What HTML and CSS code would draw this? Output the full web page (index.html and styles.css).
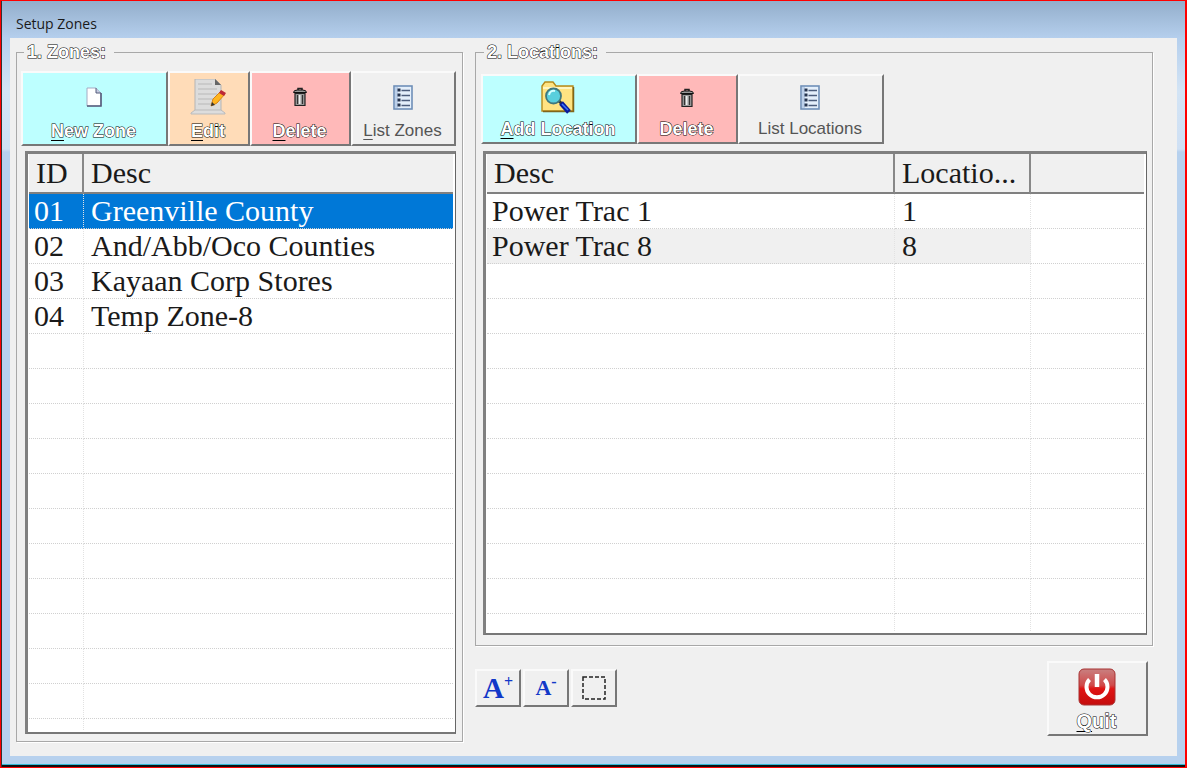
FILE: index.html
```html
<!DOCTYPE html>
<html lang="en">
<head>
<meta charset="utf-8">
<title>Setup Zones</title>
<link rel="stylesheet" href="styles.css">
</head>
<body>
<svg class="defs" aria-hidden="true">
  <symbol id="bin" viewBox="0 0 16 20">
    <path d="M6 3V1.500h4V3" fill="none" stroke="#222" stroke-width="1.500"/>
    <path d="M1.500 5.500q0-2.500 4-2.500h5q4 0 4 2.500z" fill="#999" stroke="#111"/>
    <path d="M3 6.500h10v12H3z" fill="#999" stroke="#222" stroke-width="1.200"/>
    <path d="M5.500 8v9M10.500 8v9" stroke="#333" stroke-width="1.100"/>
    <path d="M7.700 8v9" stroke="#eee" stroke-width="1.600"/>
  </symbol>
  <symbol id="list" viewBox="0 0 20 25">
    <rect x="1" y="1" width="18" height="23" fill="#e4effb" stroke="#6f8fb8" stroke-width="1.600"/>
    <path d="M2 2h3v21H2z" fill="#bcd0ea"/>
    <path d="M4.500 5h3M4.500 10h3M4.500 15h3M4.500 20h3" stroke="#26354f" stroke-width="3"/>
    <path d="M8.500 5.500H17M8.500 10.500H17M8.500 15.500H17M8.500 20.500H17" stroke="#4c5d7c" stroke-width="1.300"/>
  </symbol>
</svg>
<div class="window">
  <header class="titlebar">Setup Zones</header>
  <main class="client">
    <fieldset class="group zones">
      <legend class="hollow">1. Zones:</legend>
      <div class="toolbar">
        <button class="tool cyan new-zone" type="button">
          <svg class="icon" width="32" height="32" viewBox="0 0 32 32"><path d="M9 7h9l5 5v13H9z" fill="#fff" stroke="#a4abc4"/><path d="M18 7v5h5" fill="#c5cbe0" stroke="#555d7c"/><path d="M23 12v13H9" fill="none" stroke="#555d7c" stroke-width="1.600"/></svg>
          <span class="hollow"><u>N</u>ew Zone</span>
        </button>
        <button class="tool peach edit" type="button">
          <svg class="icon" width="38" height="36" viewBox="0 0 38 36"><path d="M6 0h20l6 6v28H6z" fill="#dcdcdc" stroke="#b5b5b5"/><path d="M26 0v6h6z" fill="#666"/><path d="M9 5h14M9 10h19M9 15h19M9 20h15M9 25h13" stroke="#b8b8b8" stroke-width="1.200"/><path d="M2 34l4-3h26l4 3v1H2z" fill="#ddd" stroke="#bbb"/><path d="M22 27l2-7 8-8 4 3-8 9z" fill="#ffb51f" stroke="#d68316"/><path d="M30 14l2-3 5 3-2 3z" fill="#bd2838"/><path d="M22 27l1-4 3 3z" fill="#333"/></svg>
          <span class="hollow"><u>E</u>dit</span>
        </button>
        <button class="tool pink delete-zone" type="button">
          <svg class="icon" width="16" height="20"><use href="#bin"/></svg>
          <span class="hollow"><u>D</u>elete</span>
        </button>
        <button class="tool list-zones" type="button">
          <svg class="icon" width="20" height="25"><use href="#list"/></svg>
          <span class="thin"><u>L</u>ist Zones</span>
        </button>
      </div>
      <div class="listbox">
        <table>
          <colgroup><col class="col-id"><col></colgroup>
          <thead><tr><th>ID</th><th>Desc</th></tr></thead>
          <tbody>
            <tr class="selected"><td>01</td><td>Greenville County</td></tr>
            <tr><td>02</td><td>And/Abb/Oco Counties</td></tr>
            <tr><td>03</td><td>Kayaan Corp Stores</td></tr>
            <tr><td>04</td><td>Temp Zone-8</td></tr>
            <tr><td></td><td></td></tr>
            <tr><td></td><td></td></tr>
            <tr><td></td><td></td></tr>
            <tr><td></td><td></td></tr>
            <tr><td></td><td></td></tr>
            <tr><td></td><td></td></tr>
            <tr><td></td><td></td></tr>
            <tr><td></td><td></td></tr>
            <tr><td></td><td></td></tr>
            <tr><td></td><td></td></tr>
            <tr><td></td><td></td></tr>
            <tr class="rest"><td></td><td></td></tr>
          </tbody>
        </table>
      </div>
    </fieldset>
    <div class="side">
      <fieldset class="group locations">
        <legend class="hollow">2. Locations:</legend>
        <div class="toolbar">
          <button class="tool cyan add-location" type="button">
            <svg class="icon" width="34" height="34" viewBox="0 0 34 34"><path d="M1 30V5l3-4h8l3 4h17v25z" fill="#ffe382" stroke="#b58a1c" stroke-width="1.400"/><path d="M2 7h29" stroke="#fff6c0" stroke-width="2"/><path d="M32.500 6v24.500H2" fill="none" stroke="#80651c" stroke-width="1.500"/><path d="M18 20l3 3" stroke="#333" stroke-width="3"/><path d="M20 22l8 9" stroke="#0a1b9c" stroke-width="5"/><path d="M21 23l6 6" stroke="#3f79ff" stroke-width="1.500"/><circle cx="12.500" cy="15" r="7.500" fill="#59cfdd" stroke="#40777c" stroke-width="1.800"/><path d="M8 14q1-5 6-4" fill="none" stroke="#d5ffff" stroke-width="2"/></svg>
            <span class="hollow"><u>A</u>dd Location</span>
          </button>
          <button class="tool pink delete-location" type="button">
            <svg class="icon" width="16" height="20"><use href="#bin"/></svg>
            <span class="hollow">Delete</span>
          </button>
          <button class="tool list-locations" type="button">
            <svg class="icon" width="20" height="25"><use href="#list"/></svg>
            <span class="thin">List Locations</span>
          </button>
        </div>
        <div class="listbox">
          <table>
            <colgroup><col class="col-desc"><col class="col-location"><col></colgroup>
            <thead><tr><th>Desc</th><th>Locatio...</th><th></th></tr></thead>
            <tbody>
              <tr><td>Power Trac 1</td><td>1</td><td></td></tr>
              <tr class="shaded"><td>Power Trac 8</td><td>8</td><td></td></tr>
              <tr><td></td><td></td><td></td></tr>
              <tr><td></td><td></td><td></td></tr>
              <tr><td></td><td></td><td></td></tr>
              <tr><td></td><td></td><td></td></tr>
              <tr><td></td><td></td><td></td></tr>
              <tr><td></td><td></td><td></td></tr>
              <tr><td></td><td></td><td></td></tr>
              <tr><td></td><td></td><td></td></tr>
              <tr><td></td><td></td><td></td></tr>
              <tr><td></td><td></td><td></td></tr>
              <tr class="rest"><td></td><td></td><td></td></tr>
            </tbody>
          </table>
        </div>
      </fieldset>
      <footer class="actions">
        <div class="sizes">
          <button class="small" type="button" aria-label="Larger text"><span class="big-a">A</span><sup>+</sup></button>
          <button class="small" type="button" aria-label="Smaller text"><span class="little-a">A</span><sup>-</sup></button>
          <button class="small" type="button" aria-label="Select area"><svg width="24" height="24" viewBox="0 0 24 24"><rect x="1" y="1" width="22" height="22" fill="none" stroke="#222" stroke-width="1.500" stroke-dasharray="4 2"/></svg></button>
        </div>
        <button class="tool quit" type="button">
          <svg class="icon" width="38" height="38" viewBox="0 0 38 38"><defs><linearGradient id="red" x1="0" y1="0" x2="0" y2="1"><stop offset="0" stop-color="#c98080"/><stop offset=".45" stop-color="#d14a4a"/><stop offset=".55" stop-color="#e01414"/><stop offset="1" stop-color="#c40c0c"/></linearGradient></defs><rect x="1" y="1" width="36" height="36" rx="5" fill="url(#red)" stroke="#a83232"/><path d="M11.500 11.500a10.500 10.500 0 1 0 15 0" fill="none" stroke="#fff" stroke-width="4"/><path d="M19 6v13" stroke="#fff" stroke-width="4.500"/></svg>
          <span class="hollow"><u>Q</u>uit</span>
        </button>
      </footer>
    </div>
  </main>
</div>
</body>
</html>
```
FILE: styles.css
```css
* { box-sizing: border-box; }
body {
  margin: 0;
  background: #b9d1ea;
  font-family: "Liberation Sans", Arial, sans-serif;
  color: #1a1a1a;
}
.defs { display: none; }
.window {
  display: flex;
  flex-direction: column;
  min-height: 100vh;
  padding: 0 8px 11px 9px;
  border: 1px solid #f00;
  border-width: 1px 2px 2px 1px;
  background: linear-gradient(#93aecb 0, #b5cfed 37px, #d3e4f5 90px, #cfe0f4 148px, #b7d1ee 151px);
  box-shadow: inset 1px 0 #333, inset 0 -2px #111, inset 0 -3px #35b9d3;
}
.titlebar {
  height: 37px;
  padding: 13px 0 0 6px;
  font: 14px/20px "Open Sans", "Noto Sans", sans-serif;
}
.client {
  flex: 1;
  display: grid;
  grid-template-columns: minmax(0, 447fr) minmax(0, 678fr);
  gap: 12px;
  padding: 4px 24px 14px 6px;
  background: #f0f0f0;
}
.side { display: flex; flex-direction: column; }
.group {
  display: flex;
  flex-direction: column;
  min-width: 0;
  margin: 0;
  border: 1px solid #a8a8a8;
  box-shadow: 1px 1px #fff;
}
.zones { padding: 9px 6px 7px 4px; }
.locations { padding: 12px 5px 10px; }
.group legend {
  margin-left: 3px;
  padding: 0 8px 0 3px;
  line-height: 20px;
}
.hollow {
  font-size: 18px;
  font-weight: bold;
  color: #fff;
  -webkit-text-stroke: 1px #000;
  paint-order: stroke fill;
}
.thin { font-size: 17px; color: #555; }
.toolbar { display: flex; }
button {
  margin: 0;
  border: 2px solid;
  border-color: #fafafa #777 #777 #fafafa;
  background: #f0f0f0;
  font-family: inherit;
}
.tool {
  display: flex;
  flex-direction: column;
  align-items: center;
  justify-content: space-between;
  padding: 0 2px 3px 0;
  line-height: 20px;
}
.tool .icon { margin: auto; }
.tool u { text-decoration-thickness: 1px; text-underline-offset: 3px; }
.zones .tool { height: 75px; }
.locations .tool { height: 70px; }
.cyan { background: #bdffff; }
.peach { background: #ffdcb8; }
.pink { background: #ffb9b9; }
.new-zone { flex: 0 1 147px; }
.edit { flex: 0 1 82px; }
.delete-zone { flex: 0 1 101px; }
.list-zones { flex: 0 1 105px; }
.add-location { flex: 0 1 156px; }
.delete-location { flex: 0 1 101px; }
.list-locations { flex: 0 1 146px; }
.listbox {
  flex: 1;
  overflow: hidden;
  padding: 0 2px 2px 1px;
  border: 3px solid #808080;
  border-right: 1px solid #666;
  border-bottom: 2px solid #777;
  background: #fff;
}
.zones .listbox { margin: 5px 0 0 4px; }
.locations .listbox { margin: 7px 0 0 2px; }
table {
  width: 100%;
  border-collapse: separate;
  border-spacing: 0;
  table-layout: fixed;
  font: 30px/34px "Liberation Serif", "Times New Roman", serif;
}
.col-id { width: 55px; }
.col-desc { width: 408px; }
.col-location { width: 136px; }
th, td {
  padding: 0 0 0 5px;
  overflow: hidden;
  text-align: left;
  font-weight: normal;
  white-space: nowrap;
}
th {
  height: 40px;
  padding: 0 0 0 7px;
  border-right: 2px solid #888;
  border-bottom: 2px solid #808080;
  background: #f0f0f0;
}
th:last-child { border-right: 0; }
td {
  height: 35px;
  border-right: 1px dotted #e2e2e2;
  border-bottom: 1px dotted #d0d0d0;
}
td + td { padding-left: 7px; }
td:last-child { border-right: 0; }
.rest td { height: 11px; border-bottom: 0; }
.locations .rest td { height: 17px; }
.selected td { background: #0078d7; color: #fff; }
.shaded td:not(:last-child) { background: #f0f0f0; }
.actions { display: flex; justify-content: space-between; padding: 15px 5px 0 0; }
.sizes { display: flex; gap: 2px; padding-top: 8px; }
.small {
  display: flex;
  align-items: center;
  justify-content: center;
  width: 46px;
  height: 38px;
  padding: 0;
  font-family: "Liberation Serif", serif;
  font-weight: bold;
  color: #1238c8;
}
.small sup { align-self: flex-start; padding-top: 3px; font-size: 16px; line-height: 16px; }
.big-a { font-size: 29px; }
.little-a { font-size: 22px; }
.quit { width: 101px; height: 75px; }
.quit .hollow { font-size: 20px; }
```
